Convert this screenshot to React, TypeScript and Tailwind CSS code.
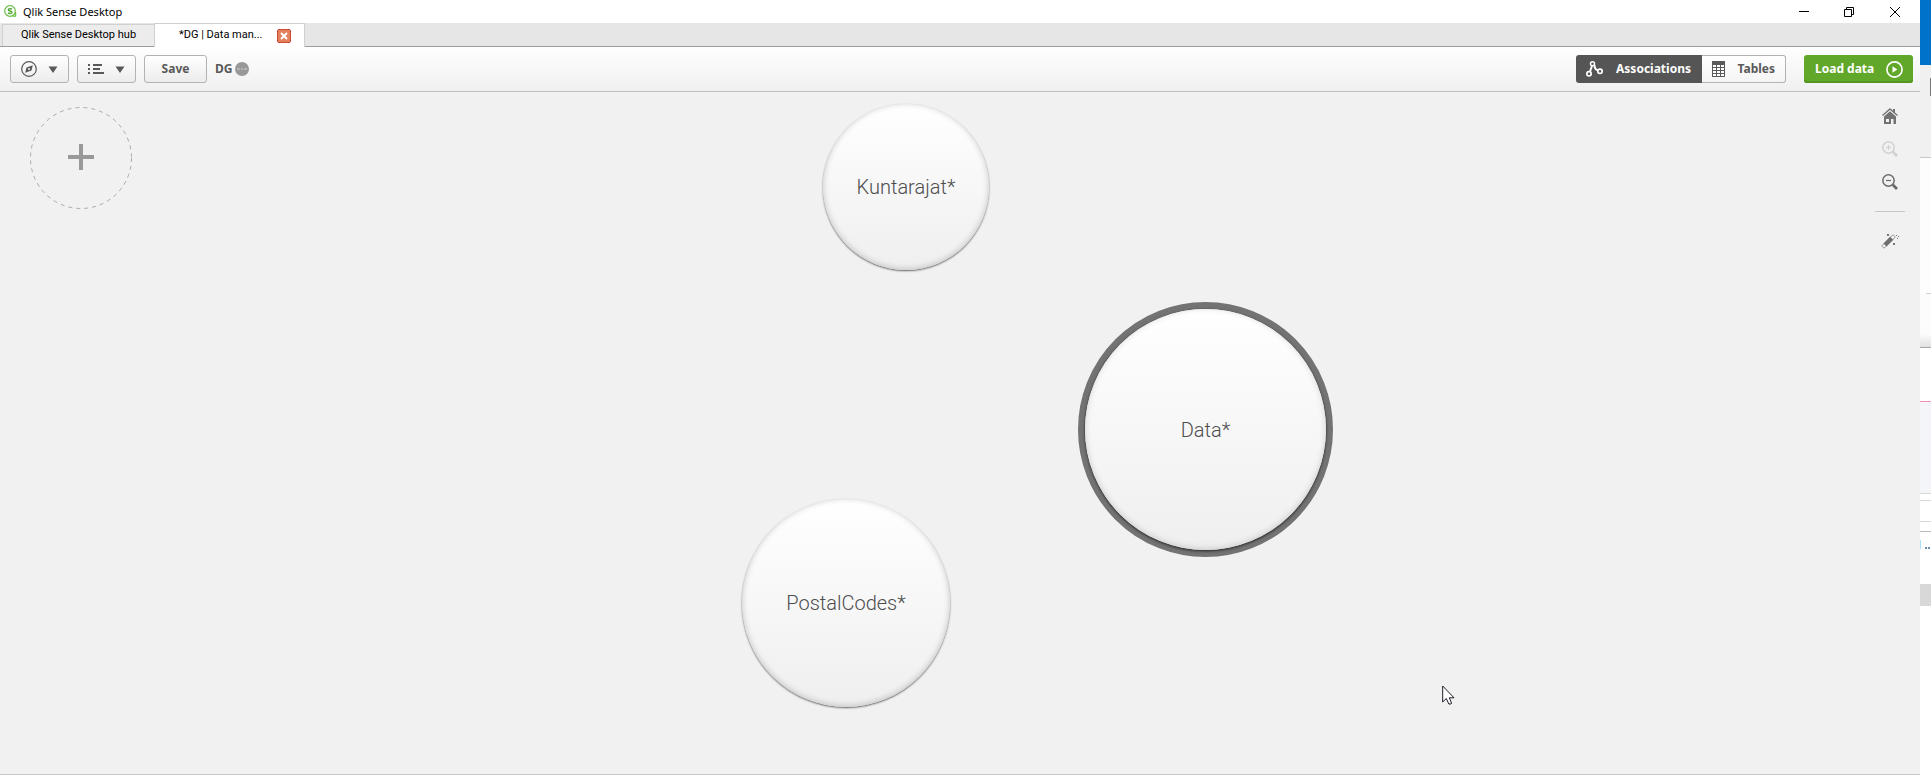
import type { ReactNode } from "react";

function QlikLogo() {
  return (
    <svg width="14" height="14" viewBox="0 0 14 14" fill="none" aria-hidden="true">
      <circle cx="6" cy="6" r="5.300" stroke="#6cbf4b" strokeWidth="1.200" />
      <path d="M8.500 11.200H11.600V7" stroke="#6cbf4b" strokeWidth="1.200" />
      <path d="M8 4.300C7.300 3.500 4.300 3.400 4.300 4.800C4.300 6.400 8 5.600 8 7.300C8 8.900 4.800 8.600 4 7.800" stroke="#52a832" strokeWidth="1.400" />
    </svg>
  );
}

function CompassIcon() {
  return (
    <svg width="16" height="16" viewBox="0 0 16 16" fill="none" aria-hidden="true">
      <circle cx="8" cy="8" r="7.300" stroke="#595959" strokeWidth="1.200" />
      <path fillRule="evenodd" d="M11.800 4.200L10.500 9.500L4.200 11.800L5.500 6.500ZM8 7A1 1 0 1 0 8 9A1 1 0 1 0 8 7Z" fill="#595959" />
    </svg>
  );
}

function ListIcon() {
  return (
    <svg width="17" height="10" viewBox="0 0 17 10" fill="#595959" aria-hidden="true">
      <path d="M0 0h2v2H0zM5 0h9v2H5zM0 4h2v2H0zM5 4h7v2H5zM0 8h2v2H0zM5 8h11v2H5z" />
    </svg>
  );
}

function Caret() {
  return (
    <svg width="10" height="7" viewBox="0 0 10 7" fill="#595959" aria-hidden="true">
      <path d="M0.500 0.500H9.500L5 7Z" />
    </svg>
  );
}

function AssociationsIcon() {
  return (
    <svg width="18" height="16" viewBox="0 0 18 16" fill="none" stroke="#fff" aria-hidden="true">
      <circle cx="6.500" cy="2.800" r="2" strokeWidth="1.500" />
      <circle cx="3" cy="12.800" r="2.200" strokeWidth="1.700" />
      <circle cx="14" cy="10.300" r="2.200" strokeWidth="1.700" />
      <path d="M6 5L4 10.500M8.300 4.200C9.500 6 7.500 8 12 9.500" strokeWidth="2" />
    </svg>
  );
}

function TableIcon() {
  return (
    <svg width="13" height="16" viewBox="0 0 13 16" aria-hidden="true">
      <path d="M0 0h13v16H0z" fill="#595959" />
      <path d="M1 4h3v2H1zM5 4h3v2H5zM9 4h3v2H9zM1 7h3v2H1zM5 7h3v2H5zM9 7h3v2H9zM1 10h3v2H1zM5 10h3v2H5zM9 10h3v2H9zM1 13h3v2H1zM5 13h3v2H5zM9 13h3v2H9z" fill="#fff" />
    </svg>
  );
}

function PlayIcon() {
  return (
    <svg width="17" height="17" viewBox="0 0 17 17" fill="none" aria-hidden="true">
      <circle cx="8.500" cy="8.500" r="7.600" stroke="#fff" strokeWidth="1.600" />
      <path d="M6.500 5.300L11.300 8.500L6.500 11.700Z" fill="#fff" />
    </svg>
  );
}

function HomeIcon() {
  return (
    <svg width="16" height="16" viewBox="0 0 16 16" aria-hidden="true">
      <path d="M0.500 7.500L8 1L15.500 7.500" fill="none" stroke="#737373" strokeWidth="1.400" />
      <path d="M11 1h2v4L11 3.200z" fill="#737373" />
      <path fillRule="evenodd" d="M8 3.300L14 8.500V16H11.500V11H9V16H2V8.500ZM4 11V14H7V11Z" fill="#737373" />
    </svg>
  );
}

function ZoomIcon({ plus }: { plus?: boolean }) {
  return (
    <svg width="16" height="16" viewBox="0 0 16 16" fill="none" stroke="currentColor" aria-hidden="true">
      <circle cx="6.500" cy="6.500" r="5.700" strokeWidth="1.500" />
      <path d="M4 6.500H9" strokeWidth="1.200" />
      {plus && <path d="M6.500 4V9" strokeWidth="1.200" />}
      <path d="M10.800 10.800L15 15" strokeWidth="2.800" />
    </svg>
  );
}

function WandIcon() {
  return (
    <svg width="18" height="16" viewBox="0 0 18 16" aria-hidden="true">
      <g transform="rotate(-45 7.500 8.500)">
        <rect x="-0.500" y="6.800" width="16" height="3.400" rx="0.800" fill="#f1f1f1" stroke="#8a8a8a" strokeWidth="0.900" />
        <rect x="2.500" y="6.400" width="9.500" height="4.200" fill="#6f6f6f" />
      </g>
      <path d="M6 1h2v2H6zM12 10h2v2h-2zM16 5h1v1h-1zM15 2h1v1h-1zM17 3h1v1h-1z" fill="#777" />
    </svg>
  );
}

function ToolButton({ label, children }: { label: string; children: ReactNode }) {
  return (
    <button
      aria-label={label}
      className="flex h-7 w-[59px] items-center justify-between rounded-[3px] border border-[#b3b3b3] bg-linear-to-b from-white to-[#ececec] px-[10px]"
    >
      {children}
      <Caret />
    </button>
  );
}

const bubbles = [
  { name: "Kuntarajat*", box: "left-[823px] top-[12px] size-[166px]", selected: false },
  { name: "Data*", box: "left-[1078px] top-[210px] size-[255px]", selected: true },
  { name: "PostalCodes*", box: "left-[742px] top-[407px] size-[208px]", selected: false },
];

function TableBubble({ name, box, selected }: { name: string; box: string; selected: boolean }) {
  const edge = selected
    ? "border-[7px] border-[#737373]"
    : "shadow-[0_1px_2px_rgba(0,0,0,0.6)]";
  return (
    <button className={`absolute flex rounded-full ${edge} ${box}`}>
      <span
        className={`flex size-full items-center justify-center rounded-full bg-linear-to-b from-white to-[#efefef] font-['Roboto',sans-serif] text-xl font-light text-[#4d4d4d] ${
          selected
            ? "shadow-[0_1px_3px_rgba(0,0,0,0.75),inset_0_-1px_6px_rgba(0,0,0,0.16)]"
            : "shadow-[inset_0_-1px_6px_rgba(0,0,0,0.2)]"
        }`}
      >
        {name}
      </span>
    </button>
  );
}

function TitleBar() {
  return (
    <header className="flex h-[23px] items-center bg-white pr-0.5 pl-1">
      <QlikLogo />
      <h1 className="ml-[5px] text-[11px] leading-5 text-black">Qlik Sense Desktop</h1>
      <div className="ml-auto flex h-full">
        <button aria-label="Minimize" className="flex w-[45px] items-center justify-center">
          <svg width="10" height="10" viewBox="0 0 10 10"><path d="M0 4h10v1H0z" /></svg>
        </button>
        <button aria-label="Restore" className="flex w-[46px] items-center justify-center">
          <svg width="10" height="10" viewBox="0 0 10 10" fill="none" stroke="#000"><path d="M0.500 2.500h7v7h-7zM2.500 2.500v-2h7v7h-2" /></svg>
        </button>
        <button aria-label="Close" className="flex w-[46px] items-center justify-center">
          <svg width="10" height="10" viewBox="0 0 10 10" stroke="#000"><path d="M0 0L10 10M10 0L0 10" /></svg>
        </button>
      </div>
    </header>
  );
}

function TabStrip() {
  return (
    <nav className="flex h-6 items-end border-b border-[#9b9b9b] bg-[#e6e6e6] pl-0.5 font-['Roboto',sans-serif] text-[11px] text-black">
      <button className="h-[22px] w-[152px] border-t border-l border-[#d0d0d0] bg-[#ececec]">Qlik Sense Desktop hub</button>
      <div className="-mb-px flex h-6 w-[151px] items-center border border-b-0 border-[#d0d0d0] bg-white pl-6">
        <button>*DG | Data man...</button>
        <button aria-label="Close tab" className="mr-[13px] ml-auto flex size-[14px] items-center justify-center rounded-[2px] border border-[#cf4a30] bg-[#e0805c]">
          <svg width="8" height="8" viewBox="0 0 8 8" stroke="#fff" strokeWidth="2"><path d="M1 1L7 7M7 1L1 7" /></svg>
        </button>
      </div>
    </nav>
  );
}

function Toolbar() {
  return (
    <div className="flex h-[45px] items-center border-b border-[#bfbfbf] bg-linear-to-b from-white to-[#f0f0f0] pr-[7px] pl-[10px] text-xs font-bold text-[#595959]">
      <div className="flex items-center gap-2">
        <ToolButton label="Navigation"><CompassIcon /></ToolButton>
        <ToolButton label="Menu"><ListIcon /></ToolButton>
        <button className="h-7 w-[63px] rounded-[3px] border border-[#b3b3b3] bg-linear-to-b from-white to-[#ececec]">Save</button>
      </div>
      <span className="ml-2">DG</span>
      <svg className="ml-[3px]" width="14" height="14" viewBox="0 0 14 14" aria-hidden="true">
        <circle cx="7" cy="7" r="7" fill="#999" />
        <path d="M2 6.500h3v1H2zM6 6.500h2v1H6zM9 6.500h3v1H9z" fill="#d0d0d0" />
      </svg>
      <div className="ml-auto flex">
        <button className="flex h-7 w-[126px] items-center justify-between rounded-l-[3px] bg-[#555] pr-[11px] pl-[10px] text-white">
          <AssociationsIcon />
          Associations
        </button>
        <button className="flex h-7 w-[84px] items-center justify-between rounded-r-[3px] border border-l-0 border-[#b3b3b3] bg-linear-to-b from-white to-[#f4f4f4] pr-[10px] pl-[10px]">
          <TableIcon />
          Tables
        </button>
      </div>
      <button className="ml-[18px] flex h-7 w-[109px] items-center justify-between rounded-[3px] bg-[#61a729] pr-[10px] pl-[11px] text-white shadow-[inset_0_-2px_0_#52951f]">
        Load data
        <PlayIcon />
      </button>
    </div>
  );
}

function ViewTools() {
  return (
    <aside className="ml-auto flex w-[30px] flex-col items-center pt-[15px] text-[#6b6b6b]">
      <button aria-label="Reset zoom" className="py-[1px]"><HomeIcon /></button>
      <button aria-label="Zoom in" disabled className="mt-[15px] py-[1px] text-[#d2d2d2]"><ZoomIcon plus /></button>
      <button aria-label="Zoom out" className="mt-[15px] py-[1px]"><ZoomIcon /></button>
      <hr className="mt-5 w-full border-[#c8c8c8]" />
      <button aria-label="Preview associations" className="mt-[21px]"><WandIcon /></button>
    </aside>
  );
}

function BackgroundWindow() {
  return (
    <div className="flex w-[11px] shrink-0 flex-col overflow-hidden bg-white" aria-hidden="true">
      <div className="h-[65px] bg-[#0072c9]" />
      <div className="flex h-[93px] justify-end border-b border-[#c8c8c8] bg-[#f0f0f0] pt-[13px]">
        <div className="h-[18px] w-px bg-[#777]" />
      </div>
      <div className="h-[135px] bg-[#fdfdfd]" />
      <div className="ml-1.5 h-px bg-[#d0d0d0]" />
      <div className="h-10 bg-[#fcfcfc]" />
      <div className="h-[14px] border-b border-[#a8a8a8] bg-linear-to-b from-[#fcfcfc] to-[#e0e0e0]" />
      <div className="h-[54px] border-b border-[#f28cb8]" />
      <div className="h-[92px] border-b border-[#d8d8d8] bg-[#f4f5f8]" />
      <div className="h-[7px] border-b border-[#d8d8d8]" />
      <div className="h-[21px] border-b border-[#d8d8d8]" />
      <div className="h-[10px] border-b border-[#bcbcbc]" />
      <div className="flex h-[52px] pt-2">
        <div className="h-[9px] w-px bg-[#a6e0fa]" />
        <div className="mt-[7px] ml-1 h-[2px] w-[2px] bg-[#6b8fb0]" />
        <div className="mt-[7px] ml-px h-[2px] w-[2px] bg-[#6b8fb0]" />
      </div>
      <div className="h-[22px] bg-[#d8d8d8]" />
    </div>
  );
}

export default function App() {
  return (
    <div className="flex min-h-screen bg-white font-['Noto_Sans',sans-serif]">
      <div className="flex min-w-0 grow flex-col pb-px">
        <TitleBar />
        <TabStrip />
        <Toolbar />
        <main className="relative flex grow border-b border-[#c8c8c8] bg-[#f1f1f1] pr-[15px] pl-[30px]">
          <button aria-label="Add data" className="mt-[15px] size-[102px]">
            <svg width="102" height="102" viewBox="0 0 102 102" fill="none">
              <circle cx="51" cy="51" r="50.500" stroke="#aaa" strokeDasharray="4 4" />
              <path d="M38 48h11V37h4v11h11v4H53v11h-4V52H38z" fill="#999" />
            </svg>
          </button>
          {bubbles.map((b) => (
            <TableBubble key={b.name} {...b} />
          ))}
          <ViewTools />
          <svg className="absolute top-[593px] left-[1442px]" width="13" height="20" viewBox="0 0 13 20" aria-hidden="true">
            <path d="M0.700 1V17L4.300 13.500L6.800 19H9L9.500 18L7.300 12.800H12Z" fill="#fff" stroke="#1d1d2b" />
          </svg>
        </main>
      </div>
      <BackgroundWindow />
    </div>
  );
}
